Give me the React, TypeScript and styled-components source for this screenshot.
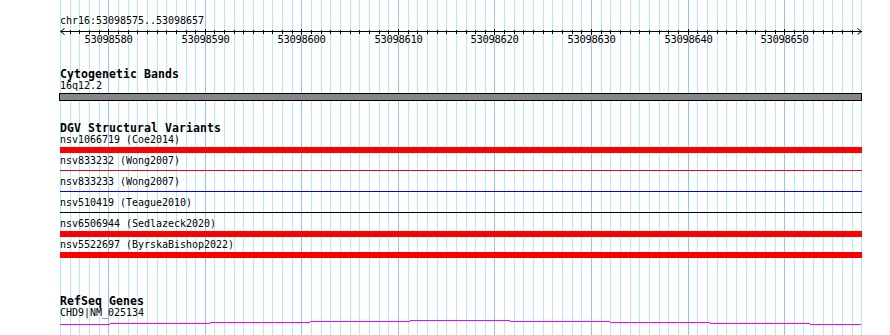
import React from "react";
import styled, { createGlobalStyle } from "styled-components";

const START = 53098575;
const END = 53098657;
const INTERVALS = END - START + 1; // 83 bases
const TRACK_WIDTH = 802;
const SPAN = 801.4;
const STEP = SPAN / INTERVALS;
const xOf = (k: number) => k * STEP;

const GlobalStyle = createGlobalStyle`
  html, body {
    margin: 0;
    padding: 0;
    background: #ffffff;
  }
  body {
    font-family: "DejaVu Sans Mono", "Liberation Mono", monospace;
    color: #000000;
  }
`;

const Page = styled.div`
  position: relative;
  width: 890px;
  height: 335px;
  overflow: hidden;
  background: #ffffff;
`;

const GridLayer = styled.svg`
  position: absolute;
  left: 60px;
  top: 0;
  z-index: 0;
`;

const Tracks = styled.div`
  position: relative;
  z-index: 1;
  display: flex;
  flex-direction: column;
  width: ${TRACK_WIDTH}px;
  padding-left: 60px;
`;

const Track = styled.section<{ $gap: number }>`
  display: flex;
  flex-direction: column;
  margin-top: ${(p) => p.$gap}px;
`;

const SmallText = styled.div`
  font-family: "DejaVu Sans Mono", "Liberation Mono", monospace;
  font-size: 10px;
  line-height: 12px;
  height: 12px;
  letter-spacing: -0.02px;
  white-space: nowrap;
  color: #000000;
`;

const TrackTitle = styled.div`
  font-family: "DejaVu Sans Mono", "Liberation Mono", monospace;
  font-weight: bold;
  font-size: 11.5px;
  line-height: 12px;
  height: 12px;
  letter-spacing: 0.08px;
  white-space: nowrap;
  color: #000000;
`;

const RulerSvg = styled.svg`
  display: block;
`;

const Band = styled.div`
  box-sizing: border-box;
  margin-top: 1px;
  margin-left: -1px;
  width: ${TRACK_WIDTH + 1}px;
  height: 8px;
  border: 1px solid #000000;
  background: #878787;
`;

const VariantRow = styled.div`
  display: flex;
  flex-direction: column;
  height: 21px;
`;

const VariantBar = styled.div<{ $color: string; $thick: boolean }>`
  width: ${TRACK_WIDTH}px;
  height: ${(p) => (p.$thick ? 6 : 1)}px;
  margin-top: ${(p) => (p.$thick ? 1 : 3)}px;
  background: ${(p) => p.$color};
`;

const GeneSvg = styled.svg`
  display: block;
`;

const variants = [
  { id: "nsv1066719", src: "Coe2014", color: "#ff0000", thick: true },
  { id: "nsv833232", src: "Wong2007", color: "#ff0000", thick: false },
  { id: "nsv833233", src: "Wong2007", color: "#0000ff", thick: false },
  { id: "nsv510419", src: "Teague2010", color: "#000000", thick: false },
  { id: "nsv6506944", src: "Sedlazeck2020", color: "#ff0000", thick: true },
  { id: "nsv5522697", src: "ByrskaBishop2022", color: "#ff0000", thick: true },
];

const geneSegments = [
  { x0: 0, x1: 50, y: 5 },
  { x0: 50, x1: 150, y: 4 },
  { x0: 150, x1: 250, y: 3 },
  { x0: 250, x1: 350, y: 2 },
  { x0: 350, x1: 450, y: 1 },
  { x0: 450, x1: 550, y: 2 },
  { x0: 550, x1: 650, y: 3 },
  { x0: 650, x1: 750, y: 4 },
  { x0: 750, x1: 801, y: 5 },
];

const ticks = Array.from({ length: INTERVALS + 1 }, (_, k) => k);

function Grid() {
  return (
    <GridLayer width={TRACK_WIDTH} height={335} shapeRendering="crispEdges">
      {ticks.map((k) => {
        const major = (START + k) % 10 === 0;
        const x = Math.round(xOf(k)) + 0.5;
        return (
          <line
            key={k}
            x1={x}
            x2={x}
            y1={0}
            y2={335}
            stroke={major ? "#8ecaee" : "#b0eef2"}
            strokeWidth={1}
          />
        );
      })}
    </GridLayer>
  );
}

function Ruler() {
  const y = 4.5;
  const end = Math.round(xOf(INTERVALS)) + 0.5;
  return (
    <RulerSvg width={TRACK_WIDTH} height={19}>
      <g shapeRendering="crispEdges" stroke="#000000" strokeWidth={1}>
        <line x1={0.5} x2={end} y1={y} y2={y} />
        {ticks.map((k) => {
          const x = Math.round(xOf(k)) + 0.5;
          const major = (START + k) % 10 === 0;
          if (k === 0 || k === INTERVALS) return null;
          return (
            <line
              key={k}
              x1={x}
              x2={x}
              y1={major ? 1.5 : 2.5}
              y2={major ? 7.5 : 6.5}
            />
          );
        })}
      </g>
      <polyline
        points={`4.5,1.5 0.5,${y} 4.5,7.5`}
        fill="none"
        stroke="#000000"
        strokeWidth={1}
      />
      <polyline
        points={`${end - 4},1.5 ${end},${y} ${end - 4},7.5`}
        fill="none"
        stroke="#000000"
        strokeWidth={1}
      />
      {ticks
        .filter((k) => (START + k) % 10 === 0)
        .map((k) => (
          <text
            key={k}
            x={Math.round(xOf(k)) + 0.5}
            y={16}
            textAnchor="middle"
            fontFamily='"DejaVu Sans Mono", "Liberation Mono", monospace'
            fontSize={10.5}
            letterSpacing={-0.32}
            fill="#000000"
          >
            {START + k}
          </text>
        ))}
    </RulerSvg>
  );
}

function Gene() {
  return (
    <GeneSvg width={TRACK_WIDTH} height={8} shapeRendering="crispEdges">
      {geneSegments.map((s, i) => (
        <rect key={i} x={s.x0} y={s.y} width={s.x1 - s.x0} height={1} fill="#ff00ff" />
      ))}
    </GeneSvg>
  );
}

export default function App() {
  return (
    <Page>
      <GlobalStyle />
      <Grid />
      <Tracks>
        <Track $gap={15}>
          <SmallText>chr16:53098575..53098657</SmallText>
          <Ruler />
        </Track>
        <Track $gap={22}>
          <TrackTitle>Cytogenetic Bands</TrackTitle>
          <SmallText>16q12.2</SmallText>
          <Band />
        </Track>
        <Track $gap={21}>
          <TrackTitle>DGV Structural Variants</TrackTitle>
          {variants.map((v) => (
            <VariantRow key={v.id}>
              <SmallText>
                {v.id} ({v.src})
              </SmallText>
              <VariantBar $color={v.color} $thick={v.thick} />
            </VariantRow>
          ))}
        </Track>
        <Track $gap={35}>
          <TrackTitle>RefSeq Genes</TrackTitle>
          <SmallText>CHD9|NM_025134</SmallText>
          <Gene />
        </Track>
      </Tracks>
    </Page>
  );
}
